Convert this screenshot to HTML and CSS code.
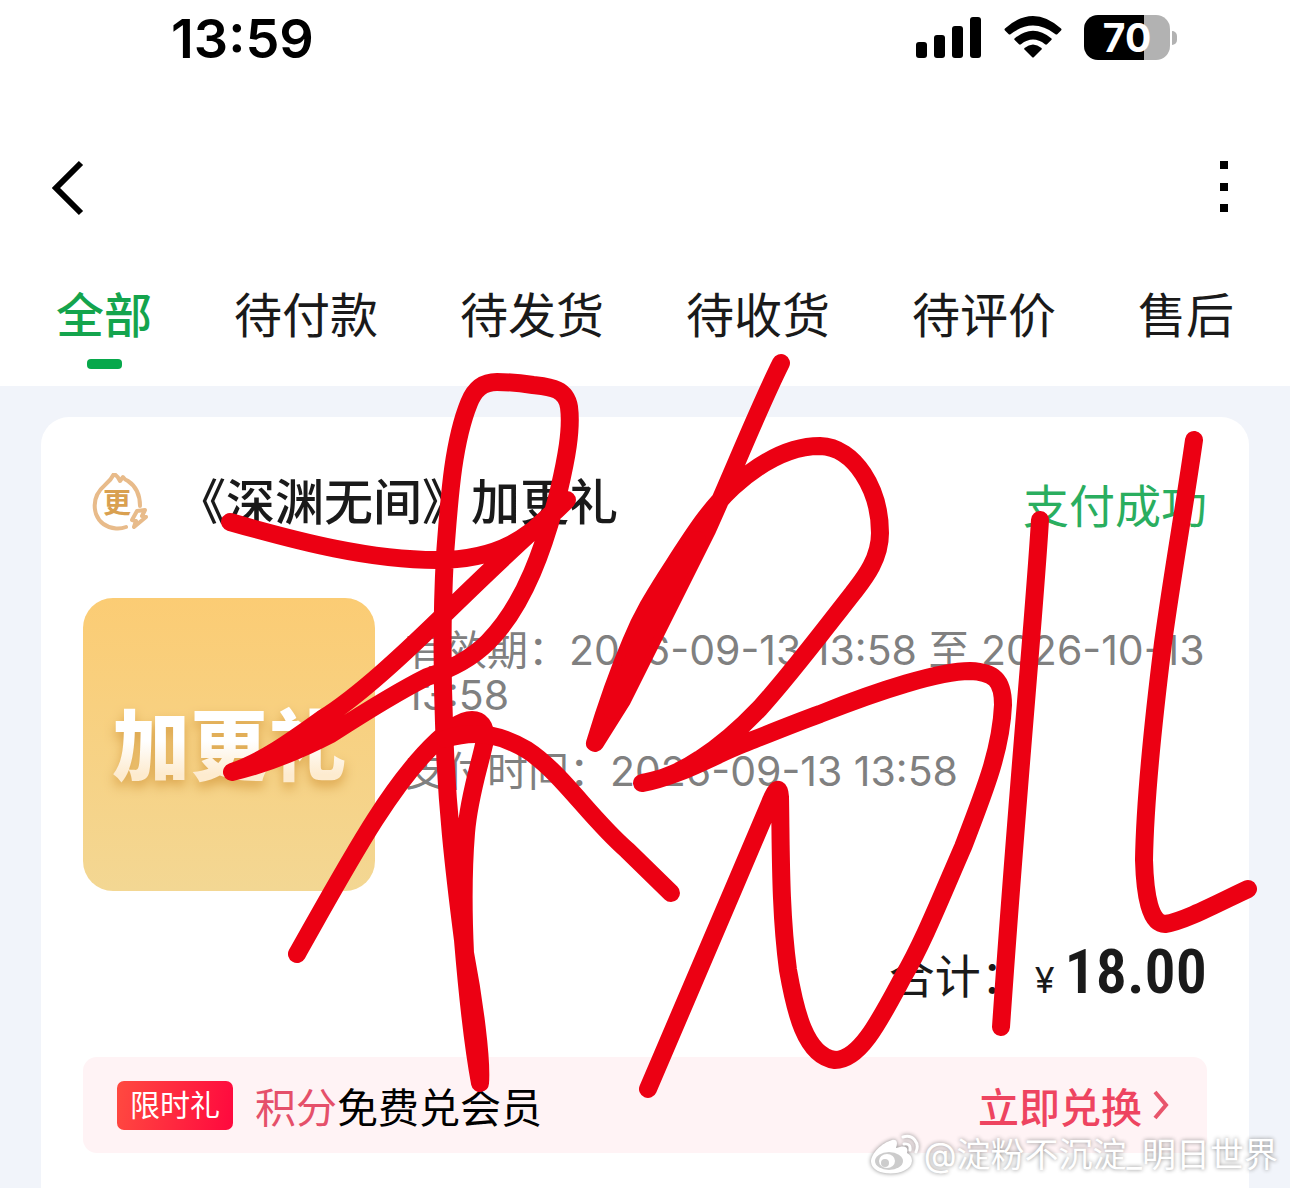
FILE: index.html
```html
<!DOCTYPE html>
<html lang="zh-CN">
<head>
  <meta charset="utf-8">
  <meta content="width=device-width, initial-scale=1.0" name="viewport">
  <title>我的订单</title>
  <link rel="stylesheet" href="styles.css">
</head>
<body>
  <header class="top">
    <div class="statusbar">
      <span class="time">13:59</span>
      <div class="indicators">
        <svg width="66" height="42" viewBox="0 0 66 42">
          <rect x="0" y="26" width="11" height="16" rx="3"/>
          <rect x="18" y="19" width="11" height="23" rx="3"/>
          <rect x="36" y="10" width="11" height="32" rx="3"/>
          <rect x="54" y="1" width="11" height="41" rx="3"/>
        </svg>
        <svg width="58" height="42" viewBox="0 0 58 42">
          <path d="M1 12.500Q0 13.500 1 14.500L4.500 18Q5.500 19 6.500 18.200Q29 1 51.500 18.200Q52.500 19 53.500 18L57 14.500Q58 13.500 57 12.500Q29 -12.500 1 12.500Z"/>
          <path d="M10.500 22.500Q10 23.300 10.700 24L15 28.300Q16 29 17 28.200Q29 19 41 28.200Q42 29 43 28.300L47.300 24Q48 23.300 47.500 22.500Q29 7 10.500 22.500Z"/>
          <path d="M20.500 32Q29 25 37.500 32Q38.200 32.700 37.500 33.500L30 41Q29 42 28 41L20.500 33.500Q19.800 32.700 20.500 32Z"/>
        </svg>
        <div class="battery"><span class="level">70</span></div>
      </div>
    </div>

    <div class="navbar">
      <button class="icon-btn" aria-label="返回">
        <svg width="32" height="56" viewBox="0 0 32 56"><path class="back" d="M29 3L4 28L29 53"/></svg>
      </button>
      <button class="icon-btn" aria-label="更多">
        <svg width="16" height="56" viewBox="0 0 16 56">
          <rect x="4" y="1" width="8" height="8"/>
          <rect x="4" y="23" width="8" height="8"/>
          <rect x="4" y="44" width="8" height="8"/>
        </svg>
      </button>
    </div>

    <nav class="tabs">
      <a class="tab active" href="#">全部</a>
      <a class="tab" href="#">待付款</a>
      <a class="tab" href="#">待发货</a>
      <a class="tab" href="#">待收货</a>
      <a class="tab" href="#">待评价</a>
      <a class="tab" href="#">售后</a>
    </nav>
  </header>

  <main class="order">
    <div class="order-head">
      <div class="shop-icon">
        <svg width="58" height="60" viewBox="0 0 58 60">
          <path d="M34 54Q29 56 24 55.500Q9 54 4 41Q-1 24 13 12Q19 7 22 1Q26 3 28 8L31 4Q33 7 36 8Q48 16 48 33"/>
          <path d="M45 38L53 37L50 43L54 44L42 54L44 48L40 47Z"/>
        </svg>
        <span class="shop-mark">更</span>
      </div>
      <h1 class="order-title">《深渊无间》加更礼</h1>
      <span class="order-status">支付成功</span>
    </div>

    <div class="order-body">
      <div class="thumb"><span class="thumb-text">加更礼</span></div>
      <div class="info">
        <p>有效期：2026-09-13 13:58 至 2026-10-13 13:58</p>
        <p>支付时间：2026-09-13 13:58</p>
      </div>
    </div>

    <div class="total">
      <span class="total-label">合计：</span>
      <span class="yen">¥</span>
      <span class="amount">18.00</span>
    </div>

    <div class="promo">
      <span class="tag">限时礼</span>
      <span class="promo-text"><em>积分</em>免费兑会员</span>
      <a class="promo-link" href="#">立即兑换
        <svg width="16" height="30" viewBox="0 0 16 30"><path d="M2 2L13 15L2 28"/></svg>
      </a>
    </div>
  </main>

  <!-- red pen drawn over the order -->
  <svg class="scribble" viewBox="0 0 1290 1188">
    <path d="M230 522C300 542 370 560 437 560C500 560 530 537 567 500C530 532 490 570 452 607C405 653 358 697 322 719C290 742 262 762 232 772C262 765 300 750 331 734C362 714 395 693 427 677C455 668 473 657 488 642C525 605 545 545 559 490C566 460 572 430 569 407C566 388 550 387 533 385C520 383 508 382 497 382C482 382 474 390 469 403C452 445 449 505 445 555C442 610 442 670 444 723C446 800 454 870 463 940C468 1000 472 1040 480 1083C482 1060 474 1000 465 953C463 910 463 870 466 833C469 795 480 765 485 740C486 725 480 720 472 720C460 720 447 732 437 741C390 785 350 860 297 954"/>
    <path d="M445 739C480 728 505 737 527 750C561 772 590 818 627 850L671 893"/>
    <path d="M781 363C758 409 732 475 707 530L622 700L595 743C605 710 617 675 631 642C642 615 654 596 666 577C690 540 708 510 733 487C765 458 795 446 820 446C855 447 880 490 880 533C880 560 863 580 853 593C820 635 790 675 760 708C740 729 722 745 700 759C684 770 662 780 642 783C680 776 710 757 743 744C768 734 795 723 820 714C880 690 940 671 970 671C994 672 1003 680 1003 705C1001 750 985 790 963 847C940 900 922 945 903 977C880 1020 860 1060 835 1060C805 1056 795 1010 788 970C780 910 781 850 780 797Q779 780 770 803L733 890L648 1089"/>
    <path d="M697 540Q660 600 640 645L612 710"/>
    <path d="M1040 520C1034 620 1018 780 1001 1027"/>
    <path d="M1194 440C1184 510 1173 570 1163 643C1154 715 1145 800 1144 860C1145 895 1150 924 1165 924C1185 921 1220 902 1248 889"/>
  </svg>

  <div class="watermark">
    <svg width="52" height="42" viewBox="0 0 52 42">
      <path class="fill" d="M22 6C12 9 1 19 1 28C2 44 41 43 42 27C42 22 39 20 37 19C39 12 34 11 26 14C28 8 27 5 22 6Z"/>
      <ellipse class="eye" cx="19" cy="27" rx="14" ry="9"/>
      <ellipse class="fill" cx="17" cy="27" rx="8" ry="7"/>
      <circle class="eye" cx="15" cy="29" r="4"/>
      <path class="wave" d="M33 3C43 0 50 9 46 18M34 10Q41 9 40 16"/>
    </svg>
    <span>@淀粉不沉淀_明日世界</span>
  </div>
</body>
</html>
```
FILE: styles.css
```css
* {
  box-sizing: border-box;
}

body {
  position: relative;
  display: flex;
  flex-direction: column;
  margin: 0;
  min-height: 100vh;
  background: #f1f4fa;
  color: #1a1a1a;
  font-family: Inter, "Noto Sans CJK SC", sans-serif;
}

svg {
  display: block;
}

a {
  color: inherit;
  text-decoration: none;
}

h1, p {
  margin: 0;
}

.top {
  background: #fff;
}

/* status bar */
.statusbar {
  display: flex;
  align-items: center;
  justify-content: space-between;
  height: 76px;
  padding: 0 113px 0 171px;
  color: #000;
}

.time {
  font-size: 54px;
  font-weight: 600;
}

.indicators {
  display: flex;
  align-items: center;
  gap: 22px;
  padding-bottom: 2px;
}

.battery {
  position: relative;
  width: 86px;
  height: 45px;
  margin-right: 7px;
  border-radius: 14px;
  background: linear-gradient(90deg, #000 60px, #b2b2b2 60px);
  color: #fff;
  text-align: center;
}

.battery:after {
  content: "";
  position: absolute;
  top: 16px;
  right: -7px;
  width: 5px;
  height: 14px;
  border-radius: 0 7px 7px 0;
  background: #b2b2b2;
}

.level {
  font-size: 39px;
  font-weight: 700;
  line-height: 46px;
}

.navbar {
  display: flex;
  justify-content: space-between;
  padding: 84px 58px 65px 52px;
}

.icon-btn {
  padding: 0;
  border: 0;
  background: none;
  cursor: pointer;
}

.back {
  fill: none;
  stroke: #000;
  stroke-width: 6;
}

/* tabs */
.tabs {
  display: flex;
  justify-content: space-between;
  padding: 0 56px 17px;
}

.tab {
  display: flex;
  flex-direction: column;
  align-items: center;
  gap: 8px;
  font-size: 48px;
  line-height: 70px;
}

.tab:after {
  content: "";
  width: 35px;
  height: 10px;
  border-radius: 4px;
}

.tab.active {
  color: #14a44d;
  font-weight: 500;
}

.tab.active:after {
  background: #07a84b;
}

/* order card */
.order {
  flex: 1;
  margin: 31px 41px 0;
  padding: 51px 42px 0;
  border-radius: 28px 28px 0 0;
  background: #fff;
}

.order-head {
  display: flex;
  align-items: center;
  height: 70px;
}

.shop-icon {
  position: relative;
  margin: 0 27px 0 9px;
  color: #d9a050;
}

.shop-icon path {
  fill: none;
  stroke: #e8bb8a;
  stroke-width: 4;
  stroke-linejoin: round;
  stroke-linecap: round;
}

.shop-mark {
  position: absolute;
  top: 12px;
  left: 11px;
  font-size: 28px;
  font-weight: 700;
  line-height: 36px;
}

.order-title {
  flex: 1;
  font-size: 49px;
  font-weight: 500;
  line-height: 70px;
}

.order-status {
  color: #2aae5f;
  font-size: 46px;
}

.order-body {
  display: flex;
  gap: 30px;
  margin-top: 60px;
}

.thumb {
  display: flex;
  flex: none;
  align-items: center;
  justify-content: center;
  width: 292px;
  height: 293px;
  padding-bottom: 8px;
  border-radius: 30px;
  background: linear-gradient(#fbcc74, #f3d793);
}

.thumb-text {
  background: linear-gradient(#fff 50%, #fdebcf 80%);
  -webkit-background-clip: text;
  background-clip: text;
  color: transparent;
  filter: drop-shadow(0 6px 6px #dba54d);
  font-size: 78px;
  font-weight: 900;
}

.info {
  flex: 1;
  padding-top: 30px;
  color: #808080;
  font-size: 41px;
  line-height: 45px;
}

.info p + p {
  margin-top: 31px;
}

.total {
  display: flex;
  align-items: baseline;
  justify-content: flex-end;
  height: 80px;
  margin-top: 41px;
  margin-bottom: 45px;
  font-size: 46px;
  line-height: 80px;
}

.total-label {
  margin-right: 8px;
}

.yen {
  margin-right: 10px;
  font-size: 36px;
}

.amount {
  font-family: "Roboto Condensed", "Liberation Sans Narrow", Roboto, sans-serif;
  font-size: 62px;
  font-weight: 600;
}

/* promo strip */
.promo {
  display: flex;
  align-items: center;
  height: 96px;
  padding: 0 38px 0 34px;
  border-radius: 14px;
  background: #fff3f5;
  color: #000;
  font-size: 41px;
}

.tag {
  margin-right: 22px;
  padding: 0 13px;
  border-radius: 7px;
  background: linear-gradient(100deg, #ff4a40, #ff083e);
  color: #fff;
  font-size: 30px;
  line-height: 49px;
}

.promo-text {
  flex: 1;
}

.promo-text em {
  color: #e5506a;
  font-style: normal;
}

.promo-link {
  display: flex;
  align-items: center;
  gap: 11px;
  color: #ee4460;
  font-weight: 500;
}

.promo-link path {
  fill: none;
  stroke: #e8556b;
  stroke-width: 4;
}

.scribble {
  position: absolute;
  top: 0;
  left: 0;
  width: 100%;
  pointer-events: none;
}

.scribble path {
  fill: none;
  stroke: #ec0013;
  stroke-width: 18;
  stroke-linecap: round;
  stroke-linejoin: round;
}

.watermark {
  position: absolute;
  right: 12px;
  bottom: 8px;
  display: flex;
  align-items: center;
  gap: 2px;
  color: #fff;
  font-size: 34px;
  line-height: 50px;
  text-shadow: 0 0 4px #888;
}

.watermark svg {
  filter: drop-shadow(0 0 2px #888);
}

.watermark .fill {
  fill: #fff;
}

.watermark .eye {
  fill: #ccc;
}

.watermark .wave {
  fill: none;
  stroke: #fff;
  stroke-width: 3;
  stroke-linecap: round;
}
```
